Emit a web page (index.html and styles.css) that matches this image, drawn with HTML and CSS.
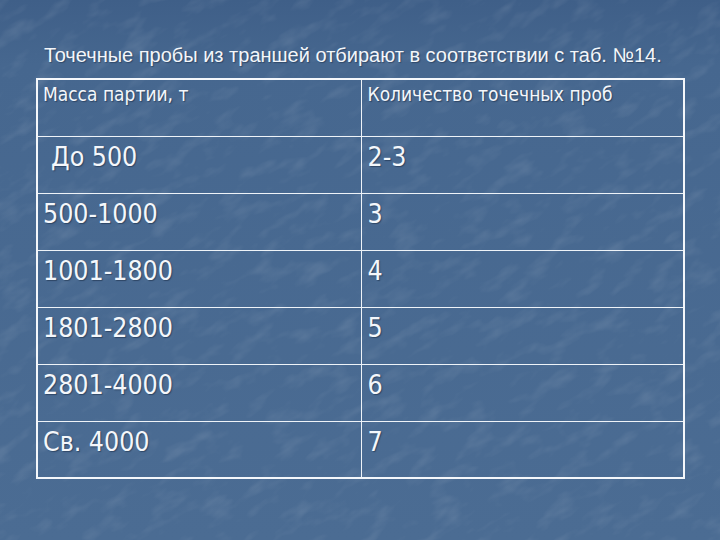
FILE: index.html
```html
<!DOCTYPE html>
<html lang="ru">
<head>
<meta charset="utf-8">
<title>Точечные пробы</title>
<link rel="stylesheet" href="styles.css">
</head>
<body>
<div class="slide">
  <svg class="texture" width="720" height="540" viewBox="0 0 720 540" aria-hidden="true">
    <defs>
      <filter id="grain" x="0" y="0" width="100%" height="100%">
        <feTurbulence type="fractalNoise" baseFrequency="0.03 0.07" numOctaves="3" seed="7" result="n"/>
        <feColorMatrix type="matrix" values="0 0 0 0 1  0 0 0 0 1  0 0 0 0 1  0 0 0 1.1 -0.55"/>
      </filter>
      <linearGradient id="shade" x1="0" y1="0" x2="0" y2="1">
        <stop offset="0" stop-color="#3f5f88"/>
        <stop offset="0.12" stop-color="#46678f"/>
        <stop offset="1" stop-color="#4b6c93"/>
      </linearGradient>
    </defs>
    <rect width="720" height="540" fill="url(#shade)"/>
    <g transform="rotate(-30 360 270)">
      <rect x="-200" y="-200" width="1120" height="940" filter="url(#grain)" opacity="0.2"/>
    </g>
  </svg>
  <div class="content">
    <p class="title">Точечные пробы из траншей отбирают в соответствии с таб. №14.</p>
    <table class="samples">
      <tr class="head">
        <td class="c1">Масса партии, т</td>
        <td class="c2">Количество точечных проб</td>
      </tr>
      <tr>
        <td class="c1 indent">До 500</td>
        <td class="c2">2-3</td>
      </tr>
      <tr>
        <td class="c1">500-1000</td>
        <td class="c2">3</td>
      </tr>
      <tr>
        <td class="c1">1001-1800</td>
        <td class="c2">4</td>
      </tr>
      <tr>
        <td class="c1">1801-2800</td>
        <td class="c2">5</td>
      </tr>
      <tr>
        <td class="c1">2801-4000</td>
        <td class="c2">6</td>
      </tr>
      <tr>
        <td class="c1">Св. 4000</td>
        <td class="c2">7</td>
      </tr>
    </table>
  </div>
</div>
</body>
</html>
```

FILE: styles.css
```css
html, body {
  margin: 0;
  padding: 0;
  background: #4a6a92;
}

.slide {
  position: relative;
  width: 720px;
  height: 540px;
  overflow: hidden;
  background: #4a6a92;
}

.texture {
  position: absolute;
  left: 0;
  top: 0;
  display: block;
}

.content {
  position: relative;
  padding: 45px 0 0 36px;
}

.title {
  margin: 0 0 0 8px;
  font-family: "Liberation Sans", Arial, sans-serif;
  font-size: 20px;
  line-height: 20px;
  color: #f3f6fa;
  text-shadow: 1px 1px 1px rgba(20, 35, 60, 0.45);
  white-space: nowrap;
}

.samples {
  margin-top: 13px;
  width: 649px;
  border-collapse: collapse;
  border: 2px solid #f4f7fb;
  font-family: "DejaVu Sans", Verdana, sans-serif;
  font-stretch: condensed;
  color: #f4f7fb;
  text-shadow: 1px 1px 1px rgba(20, 35, 60, 0.5);
}

.samples td {
  border: 1px solid #eef3f8;
  height: 57px;
  vertical-align: top;
  padding: 4px 6px 0 5px;
  font-size: 26.5px;
  line-height: 1.2;
  box-sizing: border-box;
}

.samples .c1 {
  width: 324px;
}

.samples .c2 {
  padding-left: 6px;
}

.samples .indent {
  padding-left: 13px;
}

.samples .head td {
  font-size: 19px;
  padding-top: 3px;
}
```
